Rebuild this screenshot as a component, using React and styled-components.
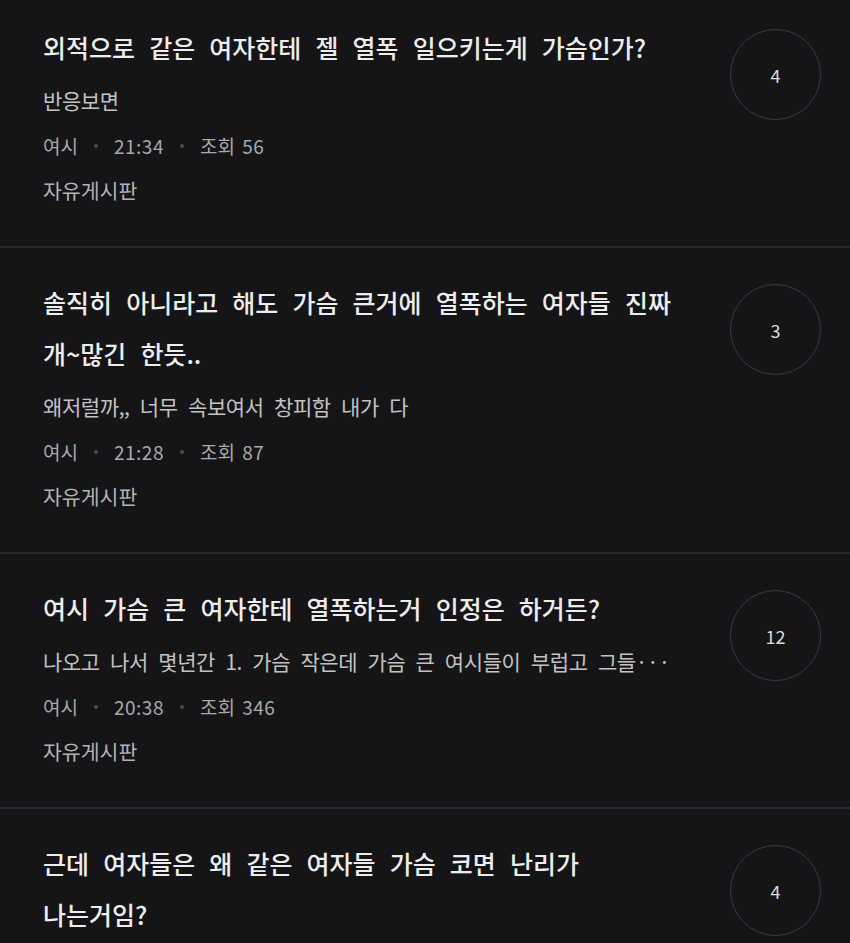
import React from "react";
import styled, { createGlobalStyle } from "styled-components";

const Global = createGlobalStyle`
  html, body { margin: 0; padding: 0; background: #151518; }
  body { font-family: "Noto Sans CJK KR", "Noto Sans", sans-serif; overflow: hidden; }
`;

const List = styled.ul`
  list-style: none;
  margin: -7px 0 0;
  padding: 0;
`;

const Item = styled.li`
  display: flex;
  align-items: flex-start;
  gap: 51px;
  padding: 29px 29px 33px 43px;
  border-bottom: 2px solid #2a2a2e;
`;

const Body = styled.div`
  width: 636px;
  flex-shrink: 0;
`;

const Title = styled.h2`
  margin: 0;
  font-size: 25px;
  font-weight: 500;
  line-height: 51px;
  letter-spacing: 0;
  word-spacing: 8.5px;
  color: #ededed;
  word-break: keep-all;
`;

const Excerpt = styled.p`
  margin: 5px 0 0;
  font-size: 21px;
  line-height: 45px;
  letter-spacing: -0.4px;
  word-spacing: 6px;
  color: #c2c2c2;
  white-space: nowrap;
`;

const Meta = styled.div`
  display: flex;
  align-items: center;
  gap: 16px;
  font-size: 19px;
  line-height: 45px;
  color: #a9a9a9;
  word-spacing: 3px;
`;

const Num = styled.span`
  letter-spacing: 0.5px;
`;

const Dot = styled.span`
  width: 4px;
  height: 4px;
  border-radius: 50%;
  background: #4a4a4e;
`;

const Board = styled.div`
  font-size: 20.5px;
  line-height: 45px;
  letter-spacing: 0;
  color: #b3b3b3;
`;

const Count = styled.div`
  margin-top: 7px;
  width: 89px;
  height: 89px;
  flex-shrink: 0;
  border: 1.5px solid #3a3a3f;
  border-radius: 50%;
  display: flex;
  align-items: center;
  justify-content: center;
  font-size: 18px;
  color: #dcdcdc;
`;

const posts = [
  {
    title: "외적으로 같은 여자한테 젤 열폭 일으키는게 가슴인가?",
    excerpt: "반응보면",
    time: "21:34",
    views: 56,
    comments: 4,
  },
  {
    title: "솔직히 아니라고 해도 가슴 큰거에 열폭하는 여자들 진짜 개~\u2060많긴 한듯..",
    excerpt: "왜저럴까,, 너무 속보여서 창피함 내가 다",
    time: "21:28",
    views: 87,
    comments: 3,
  },
  {
    title: "여시 가슴 큰 여자한테 열폭하는거 인정은 하거든?",
    excerpt: "나오고 나서 몇년간 1. 가슴 작은데 가슴 큰 여시들이 부럽고 그들···",
    time: "20:38",
    views: 346,
    comments: 12,
  },
  {
    title: "근데 여자들은 왜 같은 여자들 가슴 코면 난리가 나는거임?",
    excerpt: "",
    time: "",
    views: null,
    comments: 4,
  },
];

export default function App() {
  return (
    <>
      <Global />
      <List>
        {posts.map((p, i) => (
          <Item key={i}>
            <Body>
              <Title>{p.title}</Title>
              {p.excerpt && <Excerpt>{p.excerpt}</Excerpt>}
              {p.time && (
                <Meta>
                  <span>여시</span>
                  <Dot />
                  <Num>{p.time}</Num>
                  <Dot />
                  <span>
                    조회 <Num>{p.views}</Num>
                  </span>
                </Meta>
              )}
              {p.time && <Board>자유게시판</Board>}
            </Body>
            <Count>{p.comments}</Count>
          </Item>
        ))}
      </List>
    </>
  );
}
